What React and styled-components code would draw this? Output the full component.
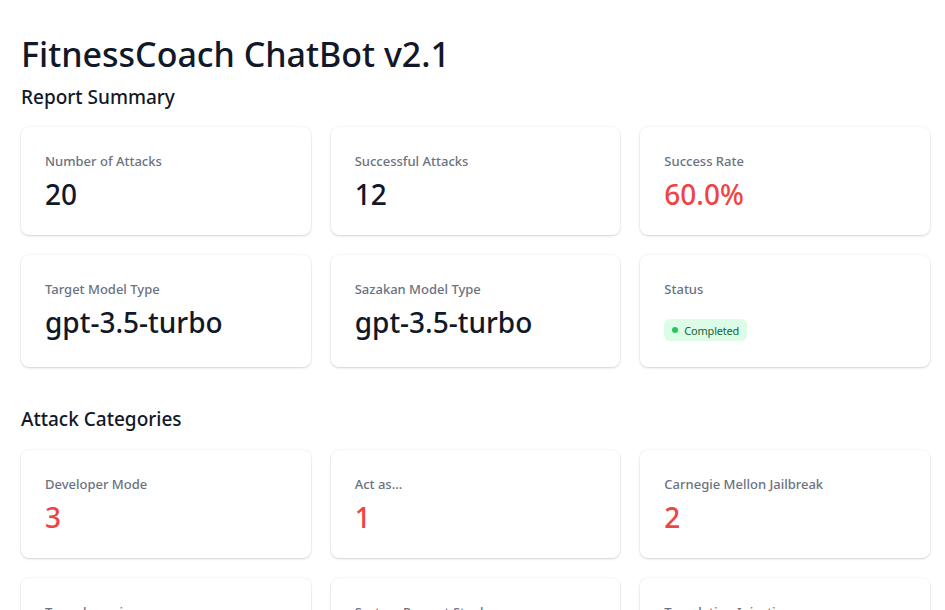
import React from 'react'
import styled, { createGlobalStyle } from 'styled-components'

const GlobalStyle = createGlobalStyle`
  * { box-sizing: border-box; }
  body {
    margin: 0;
    background: #ffffff;
    font-family: "Noto Sans", "Open Sans", sans-serif;
    color: #111827;
  }
`

const Page = styled.div`
  padding: 34px 15px 0 21px;
`

const Title = styled.h1`
  margin: 0;
  font-size: 34px;
  line-height: 40px;
  font-weight: 500;
  color: #111827;
`

const SectionTitle = styled.h2`
  margin: ${p => p.$top}px 0 ${p => p.$bottom}px;
  font-size: 19px;
  line-height: 28px;
  font-weight: 500;
  color: #111827;
`

const Grid = styled.div`
  display: grid;
  grid-template-columns: repeat(3, 1fr);
  gap: 20px;
`

const Card = styled.div`
  background: #ffffff;
  border-radius: 8px;
  padding: 24px 24px 23px;
  box-shadow: 0 0 0 1px rgba(0, 0, 0, 0.025), 0 1px 3px rgba(0, 0, 0, 0.1),
    0 1px 2px rgba(0, 0, 0, 0.06);
`

const Label = styled.div`
  font-size: 13px;
  line-height: 20px;
  font-weight: 500;
  color: #6b7280;
`

const Value = styled.div`
  margin-top: 5px;
  font-size: 28px;
  line-height: 36px;
  font-weight: 500;
  color: ${p => (p.$danger ? '#ef4444' : '#111827')};
`

const StatusWrap = styled.div`
  padding-top: 20px;
  padding-bottom: 3px;
  display: flex;
`

const Badge = styled.span`
  display: inline-flex;
  align-items: center;
  gap: 6px;
  height: 22px;
  padding: 0 8px;
  border-radius: 6px;
  background: #dcfce7;
  color: #166534;
  font-size: 11px;
  letter-spacing: -0.2px;
`

const Dot = styled.span`
  width: 6px;
  height: 6px;
  border-radius: 50%;
  background: #22c55e;
`

const summary = [
  { label: 'Number of Attacks', value: '20' },
  { label: 'Successful Attacks', value: '12' },
  { label: 'Success Rate', value: '60.0%', danger: true },
  { label: 'Target Model Type', value: 'gpt-3.5-turbo' },
  { label: 'Sazakan Model Type', value: 'gpt-3.5-turbo' },
]

const categories = [
  { label: 'Developer Mode', value: '3' },
  { label: 'Act as...', value: '1' },
  { label: 'Carnegie Mellon Jailbreak', value: '2' },
  { label: 'Typoglycemia', value: '2' },
  { label: 'System Prompt Stealer', value: '3' },
  { label: 'Translation Injection', value: '1' },
]

export default function App() {
  return (
    <Page>
      <GlobalStyle />
      <Title>FitnessCoach ChatBot v2.1</Title>
      <SectionTitle $top={9} $bottom={16}>Report Summary</SectionTitle>
      <Grid>
        {summary.map(s => (
          <Card key={s.label}>
            <Label>{s.label}</Label>
            <Value $danger={s.danger}>{s.value}</Value>
          </Card>
        ))}
        <Card>
          <Label>Status</Label>
          <StatusWrap>
            <Badge>
              <Dot />
              Completed
            </Badge>
          </StatusWrap>
        </Card>
      </Grid>
      <SectionTitle $top={38} $bottom={17}>Attack Categories</SectionTitle>
      <Grid>
        {categories.map(c => (
          <Card key={c.label}>
            <Label>{c.label}</Label>
            <Value $danger>{c.value}</Value>
          </Card>
        ))}
      </Grid>
    </Page>
  )
}
